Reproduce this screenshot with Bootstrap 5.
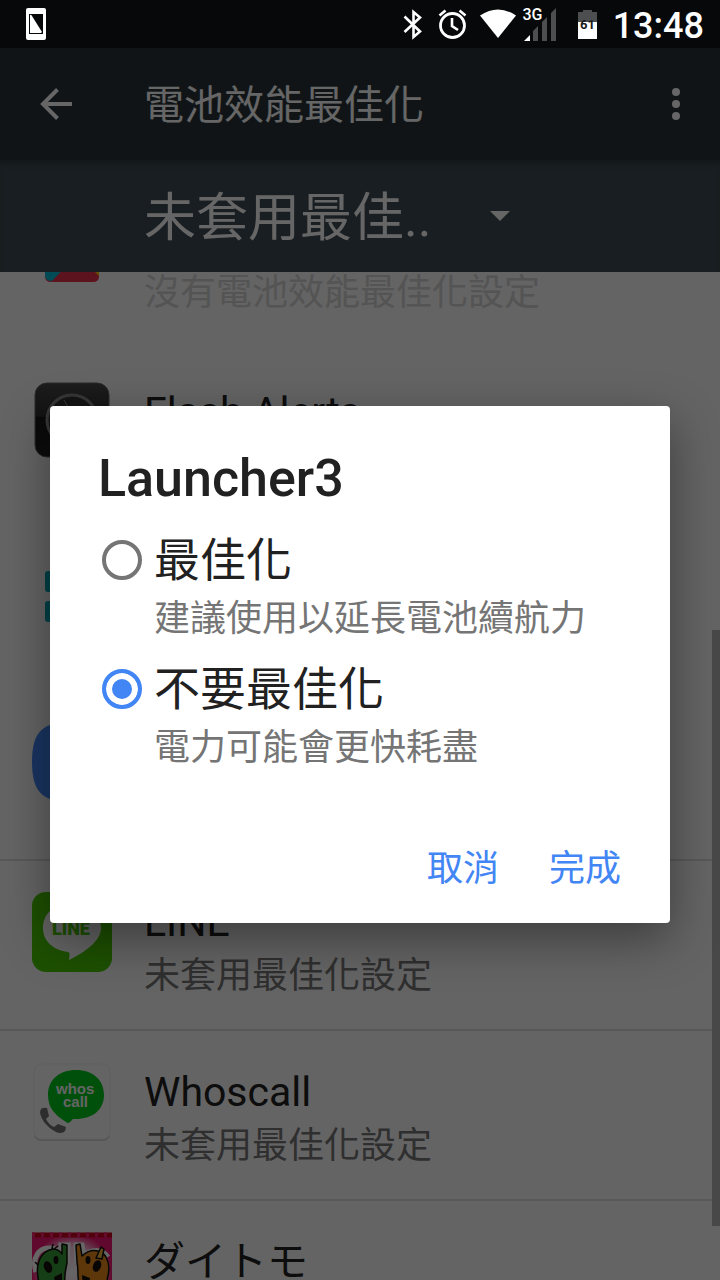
<!DOCTYPE html>
<html lang="zh-Hant">
<head>
<meta charset="utf-8">
<meta name="viewport" content="width=device-width, initial-scale=1">
<title>電池效能最佳化</title>
<link href="https://cdn.jsdelivr.net/npm/bootstrap@5.3.0/dist/css/bootstrap.min.css" rel="stylesheet">
<style>
body { font-family: Roboto, "Noto Sans CJK TC", sans-serif; background: #fafafa; color: #212121; }
svg { display: block; flex: none; }
.status-bar { height: 48px; background: #060809; color: #fff; padding: 0 16px 0 24px; }
.clock { font-size: 36px; line-height: 44px; padding-top: 4px; font-weight: 500; }
.app-bar { height: 112px; background: #283439; padding-left: 32px; padding-right: 20px; }
.bar-title { font-size: 40px; line-height: 56px; padding-top: 4px; color: #fff; }
.icon-button { width: 48px; height: 48px; }
.filter-bar { height: 112px; background: #3e4b53; padding-left: 144px; box-shadow: inset 0 6px 6px -4px #283439; }
.filter { width: 370px; height: 88px; padding: 6px 0 0; font-size: 52px; color: #fff; background: transparent; border: 0; appearance: none; }
.caret { pointer-events: none; margin-left: -24px; }
.app-list { margin-top: -93px; }
.app-row { height: 170px; padding: 33px 24px 0 32px; gap: 32px; background: transparent; }
.app-row.divided { box-shadow: inset 0 2px #dcdcdc; }
.app-name { font-size: 41px; line-height: 60px; }
.app-state { font-size: 36px; line-height: 48px; color: #757575; }
.app-row.unavailable .app-name { line-height: 57px; }
.app-row.unavailable .app-state { color: #d2d2d2; }
.scroll-thumb { top: 358px; right: 0; width: 8px; height: 596px; background: #b4b4b4; }
.scrim { background: rgba(0, 0, 0, .6); }
.dialog-layer { top: 48px; }
.dialog-box { background: #fff; border-radius: 4px; margin: 0 50px; padding-top: 43px; padding-bottom: 18px; box-shadow: 0 16px 48px rgba(0, 0, 0, .4); }
.dialog-title { font-size: 52px; line-height: 60px; font-weight: 500; margin: 0 48px 21px; }
.choice { margin: 0 48px 11px 52px; gap: 12px; }
.choice .form-check-input { width: 40px; height: 40px; margin: 10px 0 0; border: 4px solid #757575; background-image: none; flex: none; }
.choice .form-check-input:checked { border-color: #4285f4; background: #4285f4; box-shadow: inset 0 0 0 6px #fff; }
.choice-name { font-size: 46px; line-height: 60px; }
.choice-note { font-size: 36px; line-height: 58px; color: #757575; }
.dialog-actions { padding: 45px 24px 0; }
.action { font-size: 36px; line-height: 72px; color: #4285f4; padding: 0 25px; border: 0; }
</style>
</head>
<body>
<div class="vh-100 d-flex flex-column overflow-hidden position-relative">
  <header class="status-bar d-flex align-items-center flex-shrink-0">
    <svg width="24" height="32" viewBox="0 0 24 32" aria-hidden="true"><rect x="2" width="20" height="32" rx="2" fill="#fff"/><path d="M5 6h14v20H5z" fill="#060809"/><path d="M6 7q1-1 2 1l10 16-1 1H6z" fill="#fff"/></svg>
    <div class="d-flex align-items-center ms-auto">
      <svg width="186" height="48" viewBox="401 0 186 48" role="img" aria-label="藍牙、鬧鐘、Wi-Fi、行動網路">
        <path d="M404.500 16.500 420 31.500 413.500 37V12L420 17.500 404.500 32" fill="none" stroke="#fff" stroke-width="2.600"/>
        <circle cx="452.500" cy="25.500" r="12" fill="none" stroke="#fff" stroke-width="2.800"/>
        <path d="M452 18v8l6 4M439.500 15.500l6-5M465.500 15.500l-6-5" fill="none" stroke="#fff" stroke-width="2.600"/>
        <path d="M480 15.500Q498 3.500 516 15.500L498 38z" fill="#fff"/>
        <path d="M533 31l5-5v15h-5zM542 22l5-5v24h-5zM551 13l5-5v33h-5z" fill="#4d4e4f"/>
        <path d="M524 41l6-6v6z" fill="#fff"/>
        <text x="522.500" y="20" font-size="16" font-weight="500" fill="#fff">3G</text>
      </svg>
      <svg width="28" height="48" viewBox="577 0 28 48" style="margin-left:-10px" role="img" aria-label="電量 61">
        <path d="M578 12h5v-2h9v2h5v10h-19z" fill="#4d4e4f"/><path d="M578 22h19v17h-19z" fill="#fff"/>
        <text x="580" y="29" font-size="13" font-weight="700" fill="#1a1a1a">61</text>
      </svg>
      <span class="clock ms-2">13:48</span>
    </div>
  </header>

  <nav class="app-bar d-flex align-items-center flex-shrink-0">
    <button class="icon-button btn p-0 border-0" type="button" aria-label="返回">
      <svg width="48" height="48" viewBox="0 0 48 48"><path d="M40 24H11M25.500 9.500 11 24l14.500 14.500" fill="none" stroke="#fff" stroke-width="4"/></svg>
    </button>
    <h1 class="bar-title fw-normal mb-0 ms-5 ps-3">電池效能最佳化</h1>
    <button class="icon-button btn p-0 border-0 ms-auto" type="button" aria-label="更多選項">
      <svg width="48" height="48" viewBox="0 0 48 48" fill="#fff"><circle cx="24" cy="12" r="4"/><circle cx="24" cy="24" r="4"/><circle cx="24" cy="36" r="4"/></svg>
    </button>
  </nav>

  <div class="filter-bar d-flex align-items-center flex-shrink-0">
    <select class="filter" aria-label="篩選應用程式"><option>未套用最佳..</option></select>
    <svg class="caret" width="20" height="10" viewBox="0 0 20 10"><path d="M0 0h20L10 10z" fill="#fff"/></svg>
  </div>

  <main class="flex-grow-1 overflow-hidden position-relative">
    <ul class="app-list list-unstyled mb-0">
      <li class="app-row unavailable d-flex">
        <svg width="80" height="80" viewBox="0 0 80 80"><path d="M13 20h54v44q0 6-6 6H19q-6 0-6-6z" fill="#e8304a"/><path d="M13 20h54L20 69q-7 0-7-6z" fill="#00bcd4"/><path d="M63 60l4 4V54z" fill="#f5c500"/></svg>
        <div><div class="app-name">Google Play 服務</div><div class="app-state">沒有電池效能最佳化設定</div></div>
      </li>
      <li class="app-row d-flex">
        <svg width="80" height="80" viewBox="0 0 80 80">
          <defs><linearGradient id="flash" x2="0" y2="1"><stop stop-color="#484848"/><stop offset=".45" stop-color="#303030"/><stop offset=".46" stop-color="#181818"/><stop offset="1" stop-color="#202020"/></linearGradient></defs>
          <rect x="3" y="1" width="74" height="74" rx="12" fill="url(#flash)" stroke="#686868"/><circle cx="40" cy="38" r="25" fill="#333" stroke="#888" stroke-width="3"/><path d="M32 18l5 9" stroke="#888"/></svg>
        <div><div class="app-name">Flash Alerts</div><div class="app-state">未套用最佳化設定</div></div>
      </li>
      <li class="app-row d-flex">
        <svg width="80" height="80" viewBox="0 0 80 80" fill="#00a5b5"><rect x="13" y="19" width="24" height="21" rx="3"/><rect x="13" y="49" width="24" height="21" rx="3"/><rect x="45" y="19" width="24" height="21" rx="3"/><rect x="45" y="49" width="24" height="21" rx="3"/></svg>
        <div><div class="app-name">Launcher3</div><div class="app-state">未套用最佳化設定</div></div>
      </li>
      <li class="app-row d-flex">
        <svg width="80" height="80" viewBox="0 0 80 80"><path d="M40 0C12 0 0 8 0 40s12 40 40 40 40-8 40-40S68 0 40 0z" fill="#4285f4"/></svg>
        <div><div class="app-name">Launcher</div><div class="app-state">未套用最佳化設定</div></div>
      </li>
      <li class="app-row divided d-flex">
        <svg width="80" height="80" viewBox="0 0 80 80"><rect width="80" height="80" rx="14" fill="#4ac800"/><path d="M40 10C24 10 11 21 11 36c0 13 10 22 25 24 3 1 1 5 1 8 10-5 32-17 32-32C69 21 56 10 40 10z" fill="#fafafa"/><text x="20" y="43" font-size="18" font-weight="900" fill="#4ac800">LINE</text></svg>
        <div><div class="app-name">LINE</div><div class="app-state">未套用最佳化設定</div></div>
      </li>
      <li class="app-row divided d-flex">
        <svg width="80" height="80" viewBox="0 0 80 80"><rect x="2" y="3" width="76" height="76" rx="7" fill="#d4d4d4"/><rect x="2" y="2" width="76" height="75" rx="7" fill="#fafafa" stroke="#ededed"/><path d="M44 8C27 8 16 18 16 33c0 13 7 20 18 27q2 2 4 0l3-3C60 58 72 48 72 33 72 18 61 8 44 8z" fill="#00c81e"/><g fill="#fafafa" font-family="Liberation Sans, sans-serif" font-weight="700" font-size="15"><text x="24" y="32">whos</text><text x="31" y="45">call</text></g><path d="M9 47q3-2 6-1l2 8-3 3q3 6 8 8l4-3 8 3q0 3-2 5-4 2-8 0C15 65 9 58 8 50z" fill="#717171"/></svg>
        <div><div class="app-name">Whoscall</div><div class="app-state">未套用最佳化設定</div></div>
      </li>
      <li class="app-row divided d-flex">
        <svg width="80" height="80" viewBox="0 0 80 80">
          <defs><radialGradient id="glow" cy=".5"><stop stop-color="#fff"/><stop offset=".65" stop-color="#ffc8e4"/><stop offset="1" stop-color="#f01470"/></radialGradient></defs>
          <path d="M0 1h80v79H0z" fill="url(#glow)"/><path d="M0 3h80" stroke="#d00024" stroke-width="5"/><path d="M0 3h80" stroke="#f0206a" stroke-width="5" stroke-dasharray="3 6"/>
          <g fill="none" stroke="#fff" stroke-width="5"><path d="M4 40C-1 25 8 15 18 16q8 0 12 6l-1-9h7l-1 19M45 32l-1-19h6l2 11c7-7 18-8 24 1"/></g>
          <g stroke="#10100c" stroke-width="1.500" stroke-linejoin="round"><path d="M4 80c7-8 7-18 3-29-5-20 2-32 14-34 4 0 7 2 9 5l0-10 5 1 0 18c-2 9-3 13-2 21l5 28z" fill="#399b37"/><path d="M42 80c3-12 6-20 4-36 0-7 0-9-1-14l-1-17 4-1 2 12c7-7 18-8 24 1 7 13-1 23 0 33 0 10 4 16 6 22z" fill="#e88a18"/><path d="M64 26l5-11 3 2-2 10z" fill="#f2b83c"/><path d="M20 17l1-5M22 17l4-3M3 30l3 3" /></g>
          <g fill="#15100c"><ellipse cx="16" cy="35" rx="4" ry="6" transform="rotate(-20 16 35)"/><ellipse cx="24" cy="28" rx="2.500" ry="4"/><ellipse cx="65" cy="34" rx="4" ry="6" transform="rotate(20 65 34)"/><ellipse cx="56" cy="28" rx="2.500" ry="4"/><path d="M22 45l8-4 0 16h-6zM50 43l8 3-1 11h-6z"/></g></svg>
        <div lang="ja"><div class="app-name">ダイトモ</div><div class="app-state" lang="zh-Hant">未套用最佳化設定</div></div>
      </li>
    </ul>
    <div class="scroll-thumb position-absolute"></div>
  </main>

  <div class="scrim dialog-layer position-absolute start-0 end-0 bottom-0 d-flex flex-column justify-content-center">
    <form class="dialog-box" role="dialog" aria-modal="true" aria-labelledby="dialog-title">
      <h2 class="dialog-title" id="dialog-title">Launcher3</h2>
      <div class="choice d-flex">
        <input class="form-check-input" type="radio" name="mode" id="optimize">
        <label for="optimize"><span class="choice-name d-block">最佳化</span><span class="choice-note d-block">建議使用以延長電池續航力</span></label>
      </div>
      <div class="choice d-flex">
        <input class="form-check-input" type="radio" name="mode" id="keep" checked>
        <label for="keep"><span class="choice-name d-block">不要最佳化</span><span class="choice-note d-block">電力可能會更快耗盡</span></label>
      </div>
      <div class="dialog-actions d-flex justify-content-end">
        <button class="action btn" type="button">取消</button>
        <button class="action btn" type="button">完成</button>
      </div>
    </form>
  </div>
</div>
<script src="https://cdn.jsdelivr.net/npm/bootstrap@5.3.0/dist/js/bootstrap.bundle.min.js"></script>
</body>
</html>
